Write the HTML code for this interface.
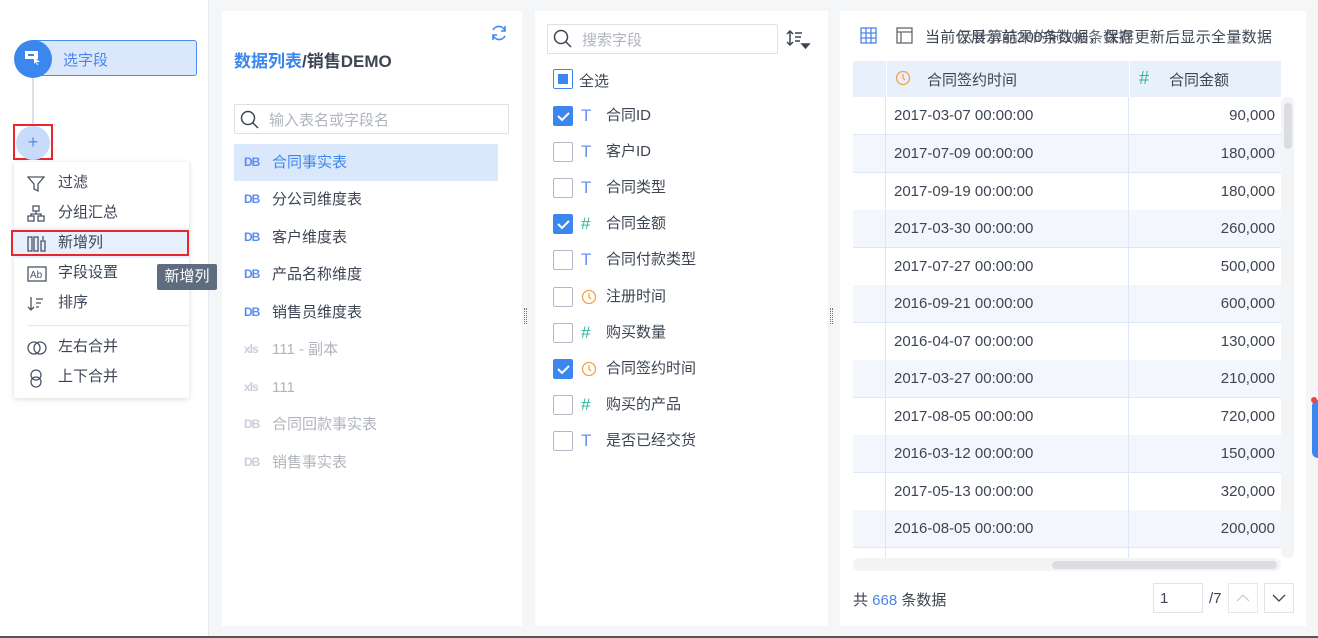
<!DOCTYPE html>
<html><head><meta charset="utf-8"><style>
*{box-sizing:border-box;margin:0;padding:0}
body{width:1318px;height:638px;overflow:hidden;background:#f5f6f8;font-family:"Liberation Sans","Noto Sans CJK SC",sans-serif;font-size:15px;color:#3d4553;position:relative}
.abs{position:absolute}
.side{left:0;top:0;width:209px;height:636px;background:#fff;border-right:1px solid #e6e8ec}
.panel{background:#fff;position:absolute}
.menu{left:14px;top:162px;width:175px;height:236px;background:#fff;box-shadow:0 1px 6px rgba(0,0,0,.15);border-radius:2px}
.mi{position:absolute;left:0;width:175px;height:30px;line-height:30px;padding-left:44px;color:#3d4553}
.mi svg{position:absolute;left:13px;top:7px}
.tl{position:absolute;left:12px;width:264px;height:37px;line-height:37px;padding-left:38px}
.tl b{position:absolute;left:10px;font-weight:bold;font-size:12px;color:#5a8cf0;letter-spacing:-1px}
.cb{position:absolute;left:18px;width:20px;height:20px;border:1px solid #b3b9c4;border-radius:2px;background:#fff}
.cb.on{background:#3c87ee;border-color:#3c87ee}
.fr{position:absolute;left:0;width:290px;height:20px}
.fr .ic{position:absolute;left:46px;top:0;font-size:17px;line-height:20px}
.fr .t{position:absolute;left:71px;top:1px;line-height:18px}
.row{position:absolute;left:853px;width:428px;height:38px;border-bottom:1px solid #dce8f8;line-height:37px}
.row .i{position:absolute;left:0;top:0;width:33px;height:37px;border-right:1px solid #dce8f8}
.row .a{position:absolute;left:33px;width:243px;height:37px;padding-left:8px;border-right:1px solid #dce8f8}
.row .b{position:absolute;left:276px;width:152px;text-align:right;padding-right:6px}
</style></head><body>
<div class="abs" style="left:0;top:0;width:2px;height:638px;background:#2c3a52"></div>
<div class="abs side">
  <div class="abs" style="left:32px;top:60px;width:2px;height:70px;background:#dde1e7"></div>
  <div class="abs" style="left:30px;top:40px;width:167px;height:36px;background:#dbe8fb;border:1px solid #4a8cf0;border-radius:3px;"></div>
  <div class="abs" style="left:14px;top:40px;width:38px;height:38px;border-radius:50%;background:#3c87ee"></div>
  <svg class="abs" style="left:24px;top:50px" width="18" height="16"><rect x="1" y="1" width="13" height="8" fill="#fff"/><rect x="4" y="4" width="6" height="2" fill="#3c87ee"/><path d="M10 7l6 5-3 0 1 3-1 0-1-3-2 2z" fill="#fff"/></svg>
  <div class="abs" style="left:63px;top:49px;color:#4a86e8">选字段</div>
  <div class="abs" style="left:13px;top:124px;width:40px;height:36px;border:2px solid #e8262d"></div>
  <div class="abs" style="left:16px;top:126px;width:34px;height:34px;border-radius:50%;background:#c8dcfa;color:#5a8cf0;text-align:center;line-height:33px;font-size:18px">+</div>
  <div class="abs menu">
    <div class="mi" style="top:6px"><svg width="18" height="18" fill="none" stroke="#4a5568" stroke-width="1.3"><path d="M1 2h16l-6 7v7l-4-2v-5z"/></svg>过滤</div>
    <div class="mi" style="top:36px"><svg width="18" height="18" fill="none" stroke="#4a5568" stroke-width="1.3"><rect x="6" y="1" width="6" height="5"/><rect x="1" y="11" width="6" height="5"/><rect x="11" y="11" width="6" height="5"/><path d="M9 6v3M4 11V9h10v2"/></svg>分组汇总</div>
    <div class="mi" style="top:66px;background:#e8f0fd"><svg width="20" height="18" fill="none" stroke="#4a5568" stroke-width="1.3"><rect x="1" y="2" width="4" height="14"/><rect x="7" y="2" width="4" height="14"/><rect x="14" y="6" width="4" height="10"/><path d="M16 1v4"/></svg>新增列</div>
    <div class="abs" style="left:-3px;top:68px;width:178px;height:26px;border:2px solid #e8262d"></div>
    <div class="mi" style="top:96px"><svg width="20" height="18" fill="none" stroke="#4a5568" stroke-width="1.3"><rect x="1" y="2" width="18" height="14"/><text x="3" y="13" font-size="10" fill="#4a5568" stroke="none" font-family="Liberation Sans">Ab</text></svg>字段设置</div>
    <div class="mi" style="top:126px"><svg width="18" height="18" fill="none" stroke="#4a5568" stroke-width="1.3"><path d="M4 2v13M1 12l3 3 3-3M9 4h7M9 8h5M9 12h3"/></svg>排序</div>
    <div class="abs" style="left:13px;top:163px;width:162px;height:1px;background:#e6e8ec"></div>
    <div class="mi" style="top:170px"><svg width="20" height="18" fill="none" stroke="#4a5568" stroke-width="1.3"><circle cx="7" cy="9" r="6"/><circle cx="13" cy="9" r="6"/></svg>左右合并</div>
    <div class="mi" style="top:200px"><svg width="18" height="20" fill="none" stroke="#4a5568" stroke-width="1.3"><circle cx="9" cy="6" r="5"/><circle cx="9" cy="13" r="5"/></svg>上下合并</div>
  </div>
  <div class="abs" style="left:157px;top:264px;width:60px;height:26px;background:#5f6b7e;color:#fff;border-radius:2px;text-align:center;line-height:26px">新增列</div>
</div>

<div class="panel" style="left:222px;top:11px;width:300px;height:615px">
  <svg class="abs" style="left:268px;top:13px" width="18" height="18" fill="none" stroke="#3c87ee" stroke-width="1.6"><path d="M15 7A6.5 6.5 0 0 0 3 6M3 11a6.5 6.5 0 0 0 12 1"/><path d="M15 2v5h-4M3 16v-5h4"/></svg>
  <div class="abs" style="left:12px;top:36px;font-size:17px;font-weight:bold;color:#3d4553"><span style="color:#3c87ee">数据列表</span>/销售DEMO</div>
  <div class="abs" style="left:12px;top:93px;width:275px;height:30px;border:1px solid #dde1e7;border-radius:2px"></div>
  <svg class="abs" style="left:18px;top:99px" width="20" height="20" fill="none" stroke="#3d4553" stroke-width="1.5"><circle cx="8" cy="8" r="6.5"/><path d="M13 13l5 5"/></svg>
  <div class="abs" style="left:47px;top:98px;color:#b0b5bd">输入表名或字段名</div>
  <div class="tl" style="top:133px;width:264px;background:#dbe8fb;color:#3c87ee"><b>DB</b>合同事实表</div>
  <div class="tl" style="top:170px"><b>DB</b>分公司维度表</div>
  <div class="tl" style="top:208px"><b>DB</b>客户维度表</div>
  <div class="tl" style="top:245px"><b>DB</b>产品名称维度</div>
  <div class="tl" style="top:283px"><b>DB</b>销售员维度表</div>
  <div class="tl" style="top:320px;color:#b0b5bd"><b style="color:#ccd">xls</b>111 - 副本</div>
  <div class="tl" style="top:358px;color:#b0b5bd"><b style="color:#ccd">xls</b>111</div>
  <div class="tl" style="top:395px;color:#b0b5bd"><b style="color:#ccd">DB</b>合同回款事实表</div>
  <div class="tl" style="top:433px;color:#b0b5bd"><b style="color:#ccd">DB</b>销售事实表</div>
</div>
<div class="abs" style="left:524px;top:308px;width:3px;height:16px;border-left:1px dotted #777;border-right:1px dotted #777"></div>
<div class="abs" style="left:830px;top:308px;width:3px;height:16px;border-left:1px dotted #777;border-right:1px dotted #777"></div>

<div class="panel" style="left:535px;top:11px;width:293px;height:615px">
  <div class="abs" style="left:12px;top:13px;width:231px;height:30px;border:1px solid #dde1e7;border-radius:2px"></div>
  <svg class="abs" style="left:18px;top:18px" width="20" height="20" fill="none" stroke="#3d4553" stroke-width="1.5"><circle cx="8" cy="8" r="6.5"/><path d="M13 13l5 5"/></svg>
  <div class="abs" style="left:47px;top:18px;color:#b0b5bd">搜索字段</div>
  <svg class="abs" style="left:251px;top:18px" width="26" height="24" fill="none" stroke="#3d4553" stroke-width="1.5"><path d="M4 2v14M1 5l3-3 3 3M1 13l3 3 3-3M9 4h7M9 8h6M9 12h5"/><path d="M16 15h7l-3.5 4z" fill="#3d4553"/></svg>
  <div class="cb" style="top:58px;border-color:#3c87ee"><div style="margin:4px;width:10px;height:10px;background:#3c87ee"></div></div>
  <div class="abs" style="left:44px;top:59px">全选</div>
  <div class="fr" style="top:95px"><div class="cb on" style="top:0"><svg width="18" height="18"><path d="M4 9l4 4 7-7" stroke="#fff" stroke-width="2" fill="none"/></svg></div><span class="ic" style="color:#6b8ff0">T</span><span class="t">合同ID</span></div>
  <div class="fr" style="top:131px"><div class="cb" style="top:0"></div><span class="ic" style="color:#6b8ff0">T</span><span class="t">客户ID</span></div>
  <div class="fr" style="top:167px"><div class="cb" style="top:0"></div><span class="ic" style="color:#6b8ff0">T</span><span class="t">合同类型</span></div>
  <div class="fr" style="top:203px"><div class="cb on" style="top:0"><svg width="18" height="18"><path d="M4 9l4 4 7-7" stroke="#fff" stroke-width="2" fill="none"/></svg></div><span class="ic" style="color:#2bb5a0">#</span><span class="t">合同金额</span></div>
  <div class="fr" style="top:239px"><div class="cb" style="top:0"></div><span class="ic" style="color:#6b8ff0">T</span><span class="t">合同付款类型</span></div>
  <div class="fr" style="top:276px"><div class="cb" style="top:0"></div><svg class="abs" style="left:46px;top:2px" width="16" height="16" fill="none" stroke="#f5a04a" stroke-width="1.3"><circle cx="8" cy="8" r="6.5"/><path d="M8 4v4l2 2"/></svg><span class="t">注册时间</span></div>
  <div class="fr" style="top:312px"><div class="cb" style="top:0"></div><span class="ic" style="color:#2bb5a0">#</span><span class="t">购买数量</span></div>
  <div class="fr" style="top:348px"><div class="cb on" style="top:0"><svg width="18" height="18"><path d="M4 9l4 4 7-7" stroke="#fff" stroke-width="2" fill="none"/></svg></div><svg class="abs" style="left:46px;top:2px" width="16" height="16" fill="none" stroke="#f5a04a" stroke-width="1.3"><circle cx="8" cy="8" r="6.5"/><path d="M8 4v4l2 2"/></svg><span class="t">合同签约时间</span></div>
  <div class="fr" style="top:384px"><div class="cb" style="top:0"></div><span class="ic" style="color:#2bb5a0">#</span><span class="t">购买的产品</span></div>
  <div class="fr" style="top:420px"><div class="cb" style="top:0"></div><span class="ic" style="color:#6b8ff0">T</span><span class="t">是否已经交货</span></div>
</div>

<div class="panel" style="left:840px;top:11px;width:466px;height:615px"></div>
<svg class="abs" style="left:860px;top:27px" width="17" height="17" fill="none" stroke="#4a86e8" stroke-width="1.3"><rect x="1" y="1" width="15" height="15"/><path d="M6 1v15M11 1v15M1 6h15M1 11h15"/></svg>
<svg class="abs" style="left:896px;top:27px" width="17" height="17" fill="none" stroke="#666" stroke-width="1.3"><rect x="1" y="1" width="15" height="15"/><path d="M1 5h15M5 5v11"/></svg>
<div class="abs" style="left:925px;top:26px;color:#3d4553;white-space:nowrap;letter-spacing:0.3px">当前仅展示前200条数据，保存更新后显示全量数据</div>
<div class="abs" style="left:958px;top:26px;color:#3d4553;white-space:nowrap;opacity:.8">示计算结果的前100条数据</div>
<div class="abs" style="left:853px;top:61px;width:428px;height:36px;background:#e8f0fc"></div>
<div class="abs" style="left:886px;top:61px;width:1px;height:36px;background:#fff"></div>
<div class="abs" style="left:1129px;top:61px;width:1px;height:36px;background:#fff"></div>
<svg class="abs" style="left:895px;top:70px" width="16" height="16" fill="none" stroke="#f5a04a" stroke-width="1.3"><circle cx="8" cy="8" r="6.5"/><path d="M8 4v4l2 2"/></svg>
<div class="abs" style="left:927px;top:69px">合同签约时间</div>
<div class="abs" style="left:1139px;top:68px;color:#2bb5a0;font-size:18px">#</div>
<div class="abs" style="left:1169px;top:69px">合同金额</div>

<div class="row" style="top:97px"><div class="i"></div><div class="a">2017-03-07 00:00:00</div><div class="b">90,000</div></div>
<div class="row" style="top:135px;background:#f3f7fd"><div class="i"></div><div class="a">2017-07-09 00:00:00</div><div class="b">180,000</div></div>
<div class="row" style="top:173px"><div class="i"></div><div class="a">2017-09-19 00:00:00</div><div class="b">180,000</div></div>
<div class="row" style="top:210px;background:#f3f7fd"><div class="i"></div><div class="a">2017-03-30 00:00:00</div><div class="b">260,000</div></div>
<div class="row" style="top:248px"><div class="i"></div><div class="a">2017-07-27 00:00:00</div><div class="b">500,000</div></div>
<div class="row" style="top:285px;background:#f3f7fd"><div class="i"></div><div class="a">2016-09-21 00:00:00</div><div class="b">600,000</div></div>
<div class="row" style="top:323px"><div class="i"></div><div class="a">2016-04-07 00:00:00</div><div class="b">130,000</div></div>
<div class="row" style="top:360px;background:#f3f7fd"><div class="i"></div><div class="a">2017-03-27 00:00:00</div><div class="b">210,000</div></div>
<div class="row" style="top:398px"><div class="i"></div><div class="a">2017-08-05 00:00:00</div><div class="b">720,000</div></div>
<div class="row" style="top:435px;background:#f3f7fd"><div class="i"></div><div class="a">2016-03-12 00:00:00</div><div class="b">150,000</div></div>
<div class="row" style="top:473px"><div class="i"></div><div class="a">2017-05-13 00:00:00</div><div class="b">320,000</div></div>
<div class="row" style="top:510px;background:#f3f7fd"><div class="i"></div><div class="a">2016-08-05 00:00:00</div><div class="b">200,000</div></div>
<div class="row" style="top:548px;height:10px;border:none"><div class="i" style="height:10px"></div><div class="a" style="height:10px"></div></div>
<div class="abs" style="left:1281px;top:97px;width:13px;height:461px;background:#f3f4f6;border-radius:6px"></div>
<div class="abs" style="left:1284px;top:103px;width:8px;height:46px;background:#dcdde1;border-radius:4px"></div>
<div class="abs" style="left:853px;top:558px;width:428px;height:13px;background:#f3f4f6;border-radius:6px"></div>
<div class="abs" style="left:1052px;top:561px;width:225px;height:8px;background:#dcdde1;border-radius:4px"></div>

<div class="abs" style="left:853px;top:589px">共 <span style="color:#4a86e8">668</span> 条数据</div>
<div class="abs" style="left:1153px;top:583px;width:50px;height:30px;border:1px solid #e0e3e8;padding:6px 0 0 6px">1</div>
<div class="abs" style="left:1209px;top:590px">/7</div>
<div class="abs" style="left:1228px;top:583px;width:30px;height:30px;border:1px solid #e6e8ec"><svg width="28" height="28" fill="none" stroke="#ccd" stroke-width="1.3"><path d="M8 17l6-6 6 6"/></svg></div>
<div class="abs" style="left:1264px;top:583px;width:30px;height:30px;border:1px solid #e0e3e8"><svg width="28" height="28" fill="none" stroke="#3d4553" stroke-width="1.3"><path d="M8 11l6 6 6-6"/></svg></div>
<div class="abs" style="left:1312px;top:400px;width:12px;height:58px;background:#3c87ee;border-radius:8px"></div>
<div class="abs" style="left:1311px;top:397px;width:6px;height:6px;background:#e84545;border-radius:50%"></div>
<div class="abs" style="left:0;top:636px;width:1318px;height:2px;background:#555"></div>
</body></html>
